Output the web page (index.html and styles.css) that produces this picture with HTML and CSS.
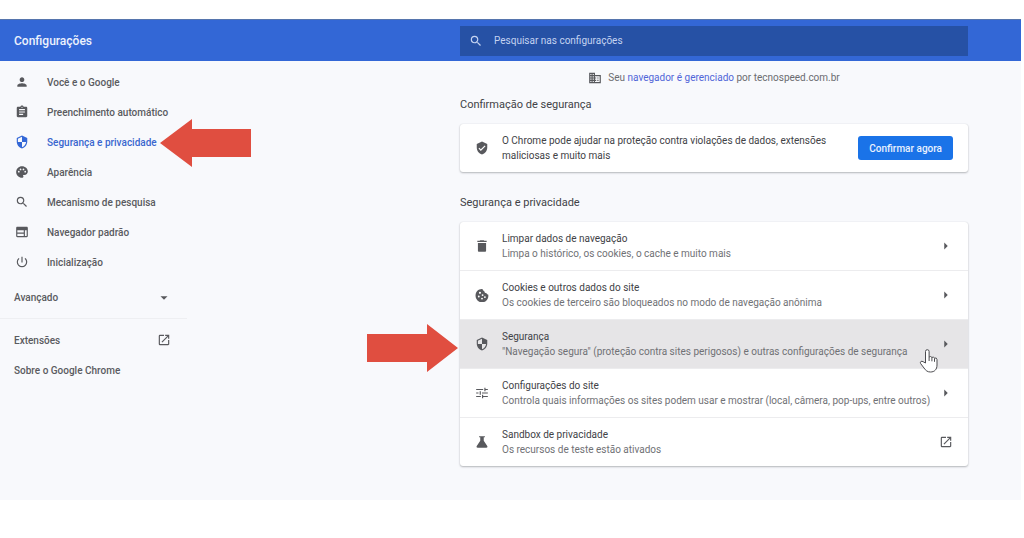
FILE: index.html
```html
<!DOCTYPE html>
<html lang="pt-BR">
<head>
<meta charset="utf-8">
<title>Configurações</title>
<link rel="stylesheet" href="styles.css">
</head>
<body>
<svg class="sprite" aria-hidden="true">
  <symbol id="search" viewBox="0 0 24 24"><path d="M15.5 14h-.79l-.28-.27A6.47 6.47 0 0 0 16 9.5 6.5 6.5 0 1 0 9.5 16c1.61 0 3.09-.59 4.23-1.57l.27.28v.79l5 4.99L20.49 19l-4.99-5zm-6 0C7.01 14 5 11.99 5 9.5S7.01 5 9.5 5 14 7.01 14 9.5 11.99 14 9.5 14z"/></symbol>
  <symbol id="person" viewBox="0 0 24 24"><path d="M12 12c2.21 0 4-1.79 4-4s-1.79-4-4-4-4 1.79-4 4 1.79 4 4 4zm0 2c-2.67 0-8 1.34-8 4v2h16v-2c0-2.66-5.33-4-8-4z"/></symbol>
  <symbol id="clipboard" viewBox="0 0 24 24"><path d="M19 3h-4.18C14.4 1.84 13.3 1 12 1s-2.4.84-2.82 2H5c-1.1 0-2 .9-2 2v14c0 1.1.9 2 2 2h14c1.1 0 2-.9 2-2V5c0-1.1-.9-2-2-2zm-7 0c.55 0 1 .45 1 1s-.45 1-1 1-1-.45-1-1 .45-1 1-1zm2 14H7v-2h7v2zm3-4H7v-2h10v2zm0-4H7V7h10v2z"/></symbol>
  <symbol id="shield" viewBox="0 0 24 24"><path d="M12 1 3 5v6c0 5.55 3.84 10.74 9 12 5.16-1.26 9-6.45 9-12V5l-9-4zm0 10.99h7c-.53 4.12-3.28 7.79-7 8.94V12H5V6.3l7-3.11v8.8z"/></symbol>
  <symbol id="verified" viewBox="0 0 24 24"><path d="M12 1 3 5v6c0 5.55 3.84 10.74 9 12 5.16-1.26 9-6.45 9-12V5l-9-4zm-2 16-4-4 1.41-1.41L10 14.17l6.59-6.59L18 9l-8 8z"/></symbol>
  <symbol id="palette" viewBox="0 0 24 24"><path d="M12 2C6.49 2 2 6.49 2 12s4.49 10 10 10c1.38 0 2.5-1.12 2.5-2.5 0-.61-.23-1.2-.64-1.67-.08-.1-.13-.21-.13-.33 0-.28.22-.5.5-.5H16c3.31 0 6-2.69 6-6 0-4.96-4.49-9-10-9zM6.5 13a1.5 1.5 0 1 1 0-3 1.5 1.5 0 0 1 0 3zm3-4a1.5 1.5 0 1 1 0-3 1.5 1.5 0 0 1 0 3zm5 0a1.5 1.5 0 1 1 0-3 1.5 1.5 0 0 1 0 3zm3 4a1.5 1.5 0 1 1 0-3 1.5 1.5 0 0 1 0 3z"/></symbol>
  <symbol id="browser" viewBox="0 0 24 24"><path d="M20 3H4c-1.1 0-2 .9-2 2v14c0 1.100.9 2 2 2h16c1.100 0 2-.9 2-2V5c0-1.100-.9-2-2-2zm-5 16H4v-4h11v4zm0-6H4V9h11v4zm5 6h-3V9h3v10z"/></symbol>
  <symbol id="power" viewBox="0 0 24 24"><path d="M13 3h-2v10h2V3zm4.830 2.170-1.420 1.420A6.920 6.920 0 0 1 19 12a7 7 0 1 1-11.420-5.420L6.170 5.170A8.930 8.930 0 0 0 3 12a9 9 0 0 0 18 0c0-2.740-1.230-5.180-3.170-6.830z"/></symbol>
  <symbol id="launch" viewBox="0 0 24 24"><path d="M19 19H5V5h7V3H5a2 2 0 0 0-2 2v14a2 2 0 0 0 2 2h14c1.1 0 2-.9 2-2v-7h-2v7zM14 3v2h3.590l-9.830 9.830 1.410 1.410L19 6.410V10h2V3h-7z"/></symbol>
  <symbol id="down" viewBox="0 0 24 24"><path d="m6 9 6 6 6-6z"/></symbol>
  <symbol id="right" viewBox="0 0 24 24"><path d="m9 6 6 6-6 6z"/></symbol>
  <symbol id="business" viewBox="0 0 24 24"><path d="M12 7V3H2v18h20V7H12zM6 19H4v-2h2v2zm0-4H4v-2h2v2zm0-4H4V9h2v2zm0-4H4V5h2v2zm4 12H8v-2h2v2zm0-4H8v-2h2v2zm0-4H8V9h2v2zm0-4H8V5h2v2zm10 12h-8v-2h2v-2h-2v-2h2v-2h-2V9h8v10zm-2-8h-2v2h2v-2zm0 4h-2v2h2v-2z"/></symbol>
  <symbol id="trash" viewBox="0 0 24 24"><path d="M5 20c0 1.100.9 2 2 2h10c1.100 0 2-.9 2-2V7H5v13zM20 3h-4l-1-1H9L8 3H4v2h16V3z"/></symbol>
  <symbol id="cookie" viewBox="0 0 24 24"><path fill-rule="evenodd" d="M22.600 11c-1.500.3-3-.8-3-2.400-2.400.2-3.900-1.400-3.600-3.600-2.100-.1-3.100-1.500-3-3.400C6.500.8 1 5.900 1 12.200a11 11 0 1 0 21.600-1.200zM8.500 6.500a1.800 1.800 0 1 1 0 3.600 1.800 1.800 0 0 1 0-3.600zm-2 6.500a1.600 1.600 0 1 1 0 3.200 1.600 1.600 0 0 1 0-3.200zm6.500-2.500a1.600 1.600 0 1 1 0 3.200 1.600 1.600 0 0 1 0-3.200zm4 3.500a1.600 1.600 0 1 1 0 3.200 1.600 1.600 0 0 1 0-3.200zm-5 2.500a1.600 1.600 0 1 1 0 3.200 1.600 1.600 0 0 1 0-3.200z"/></symbol>
  <symbol id="tune" viewBox="0 0 24 24"><path d="M2 5h12v2H2zm14-2h2v2h4v2h-4v2h-2zM2 11h4v2H2zm6-2h2v6H8zm4 2h10v2H12zM2 17h8v2H2zm10-2h2v2h8v2h-8v2h-2z"/></symbol>
  <symbol id="flask" viewBox="0 0 24 24"><path d="M7 2h10v2h-2v6l6 9c1 1.500 0 3-1.500 3h-15C3 22 2 20.500 3 19l6-9V4H7z"/></symbol>
</svg>

<div class="app">
  <header class="toolbar">
    <h1 class="toolbar-title">Configurações</h1>
    <label class="search">
      <svg class="icon"><use href="#search"/></svg>
      <input class="search-input" type="text" placeholder="Pesquisar nas configurações" aria-label="Pesquisar nas configurações">
    </label>
  </header>

  <div class="body">
    <nav class="sidebar">
      <a class="nav-item" href="#"><svg class="icon"><use href="#person"/></svg>Você e o Google</a>
      <a class="nav-item" href="#"><svg class="icon"><use href="#clipboard"/></svg>Preenchimento automático</a>
      <a class="nav-item selected" href="#"><svg class="icon"><use href="#shield"/></svg>Segurança e privacidade</a>
      <a class="nav-item" href="#"><svg class="icon"><use href="#palette"/></svg>Aparência</a>
      <a class="nav-item" href="#"><svg class="icon"><use href="#search"/></svg>Mecanismo de pesquisa</a>
      <a class="nav-item" href="#"><svg class="icon"><use href="#browser"/></svg>Navegador padrão</a>
      <a class="nav-item" href="#"><svg class="icon"><use href="#power"/></svg>Inicialização</a>
      <button class="nav-more" type="button">Avançado<svg class="icon"><use href="#down"/></svg></button>
      <div class="nav-extra">
        <a class="nav-link" href="#">Extensões<svg class="icon"><use href="#launch"/></svg></a>
        <a class="nav-link" href="#">Sobre o Google Chrome</a>
      </div>
    </nav>

    <main class="content">
      <p class="managed"><svg class="icon"><use href="#business"/></svg><span>Seu <a class="link" href="#">navegador é gerenciado</a> por tecnospeed.com.br</span></p>

      <h2 class="section-title">Confirmação de segurança</h2>
      <section class="card check">
        <svg class="icon"><use href="#verified"/></svg>
        <p class="check-text">O Chrome pode ajudar na proteção contra violações de dados, extensões maliciosas e muito mais</p>
        <button class="primary" type="button">Confirmar agora</button>
      </section>

      <h2 class="section-title">Segurança e privacidade</h2>
      <section class="card">
        <a class="row" href="#"><svg class="icon"><use href="#trash"/></svg><span class="row-text"><span class="row-title">Limpar dados de navegação</span><span class="row-sub">Limpa o histórico, os cookies, o cache e muito mais</span></span><svg class="icon"><use href="#right"/></svg></a>
        <a class="row" href="#"><svg class="icon"><use href="#cookie"/></svg><span class="row-text"><span class="row-title">Cookies e outros dados do site</span><span class="row-sub">Os cookies de terceiro são bloqueados no modo de navegação anônima</span></span><svg class="icon"><use href="#right"/></svg></a>
        <a class="row hovered" href="#"><svg class="icon"><use href="#shield"/></svg><span class="row-text"><span class="row-title">Segurança</span><span class="row-sub">"Navegação segura" (proteção contra sites perigosos) e outras configurações de segurança</span></span><svg class="icon"><use href="#right"/></svg>
          <svg class="pointer" viewBox="0 0 20 26"><path d="M6.500 15V3.500a1.800 1.800 0 0 1 3.600 0V9q1.500-1.200 2.800.4 1.600-.8 2.600.6 2.300-.6 2.500 1.600v5.400c0 4.500-2.500 7-6.500 7-3 0-4.700-1.300-6.500-4l-3.400-4.500c-.9-1.900 1-2.900 2.500-1.800zM10.100 9v4M12.900 9.500v3.800M15.500 10.300v3.500"/></svg>
        </a>
        <a class="row" href="#"><svg class="icon"><use href="#tune"/></svg><span class="row-text"><span class="row-title">Configurações do site</span><span class="row-sub">Controla quais informações os sites podem usar e mostrar (local, câmera, pop-ups, entre outros)</span></span><svg class="icon"><use href="#right"/></svg></a>
        <a class="row" href="#"><svg class="icon"><use href="#flask"/></svg><span class="row-text"><span class="row-title">Sandbox de privacidade</span><span class="row-sub">Os recursos de teste estão ativados</span></span><svg class="icon"><use href="#launch"/></svg></a>
      </section>
    </main>
  </div>

  <svg class="arrow arrow-menu" viewBox="0 0 91 48"><path d="M0 24 32 0v10h59v28H32v10z"/></svg>
  <svg class="arrow arrow-row" viewBox="0 0 91 48"><path d="M91 24 60 0v10H0v28h60v10z"/></svg>
</div>
</body>
</html>
```
FILE: styles.css
```css
* { box-sizing: border-box; }

body {
  margin: 0;
  padding: 19px 3px 38px 0;
  background: #fff;
  color: #414246;
  font: 10px/15px Roboto, "Liberation Sans", sans-serif;
}

h1, h2, p { margin: 0; font-weight: 400; }
a { color: inherit; text-decoration: none; }
button { border: 0; font: inherit; }

.sprite { position: absolute; width: 0; height: 0; }
.icon { flex: none; width: 14px; height: 14px; fill: #58595d; }

.app { position: relative; background: #f8f9fc; padding-bottom: 34px; }

.toolbar,
.body {
  display: grid;
  grid-template-columns: 460px minmax(0, 1fr);
  padding-right: 53px;
}

.toolbar {
  align-items: center;
  height: 42px;
  background: #3367d6;
  border-top: 1px solid #5675ad;
}
.toolbar-title { padding-left: 14px; color: #edf2fd; font-size: 12px; line-height: 20px; font-weight: 500; }

.search {
  display: flex;
  align-items: center;
  gap: 11px;
  height: 30px;
  padding: 0 9px;
  background: #2651a5;
}
.search .icon { fill: #c4d3f1; }
.search-input {
  flex: 1;
  border: 0;
  padding: 0;
  outline: 0;
  background: none;
  font: inherit;
  color: #c4d3f1;
}
.search-input::placeholder { color: #c4d3f1; opacity: 1; }

.sidebar {
  display: flex;
  flex-direction: column;
  width: 187px;
  padding-top: 6px;
  color: #5a5b60;
  font-weight: 500;
}
.nav-item { display: flex; align-items: center; gap: 18px; height: 30px; padding-left: 15px; }
.selected { color: #3a67cf; }
.selected .icon { fill: #3367d6; }
.nav-more,
.nav-link {
  display: flex;
  align-items: center;
  justify-content: space-between;
  padding: 0 16px 0 14px;
}
.nav-more { height: 41px; background: none; color: inherit; }
.nav-link { height: 30px; }
.nav-extra { border-top: 1px solid #eeeff2; padding-top: 6px; }

.managed {
  display: flex;
  align-items: center;
  justify-content: center;
  gap: 6px;
  padding: 9px 0 10px;
  color: #6b6c70;
}
.link { color: #5065d8; }

.section-title { font-size: 11px; line-height: 20px; }
.card {
  margin: 9px 0 21px;
  background: #fff;
  border-radius: 3px;
  box-shadow: 0 1px 2px #b4b6ba, 0 0 1px #cfd1d5;
}
.card:last-child { margin-bottom: 0; }

.check { display: flex; align-items: center; gap: 13px; padding: 9px 15px; }
.check-text { flex: 1; }
.primary {
  height: 24px;
  padding: 0 11px;
  border-radius: 3px;
  background: #1a73e8;
  color: #e8f1fe;
  font-weight: 500;
}

.row {
  position: relative;
  display: flex;
  align-items: center;
  gap: 13px;
  height: 48px;
  padding: 0 15px;
}
.row + .row { height: 49px; border-top: 1px solid #ececee; }
.row-text { flex: 1; min-width: 0; white-space: nowrap; }
.row-title, .row-sub { display: block; }
.row-sub { color: #707175; }
.hovered { background: #e6e5e7; }

/* Drawn over the page */
.pointer {
  position: absolute;
  right: 29px;
  top: 28px;
  width: 20px;
  height: 26px;
  fill: #fff;
  stroke: #4c4c50;
  z-index: 1;
}
.arrow { position: absolute; width: 91px; height: 48px; fill: #e04e40; }
.arrow-menu { left: 160px; top: 100px; }
.arrow-row { left: 367px; top: 305px; }
```
